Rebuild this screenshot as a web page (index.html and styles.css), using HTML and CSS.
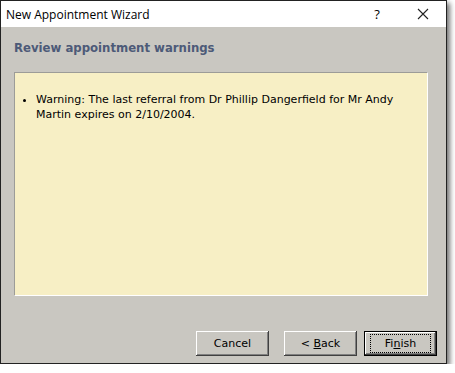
FILE: index.html
```html
<!DOCTYPE html>
<html lang="en">
<head>
    <meta charset="UTF-8">
    <title>New Appointment Wizard</title>
    <link rel="stylesheet" href="styles.css">
</head>
<body>
    <div class="window">
        <div class="titlebar">
            <span class="title">New Appointment Wizard</span>
            <span class="help">?</span>
            <span class="close">
                <svg width="12" height="12" viewBox="0 0 12 12"><path d="M1 1 L11 11 M11 1 L1 11" stroke="#222" stroke-width="1.1" fill="none"/></svg>
            </span>
        </div>
        <div class="content">
            <h1>Review appointment warnings</h1>
            <div class="panel">
                <ul class="warnings">
                    <li>Warning: The last referral from Dr Phillip Dangerfield for Mr Andy Martin expires on 2/10/2004.</li>
                </ul>
            </div>
            <div class="buttons">
                <button type="button" class="btn">Cancel</button>
                <button type="button" class="btn back">&lt; <u>B</u>ack</button>
                <button type="button" class="btn default"><span class="focus">Fi<u>n</u>ish</span></button>
            </div>
        </div>
    </div>
</body>
</html>
```

FILE: styles.css
```css
body {
    margin: 0;
    background-color: #fff;
    font-family: "DejaVu Sans", sans-serif;
}

.window {
    width: 445px;
    height: 362px;
    border: 1px solid #222;
    background-color: #c9c7c1;
    box-shadow: 3px 3px 5px rgba(0, 0, 0, 0.55);
    display: flex;
    flex-direction: column;
}

.titlebar {
    height: 26px;
    background-color: #fff;
    display: flex;
    align-items: center;
    font-family: "Open Sans", sans-serif;
    font-size: 12px;
    color: #000;
}

.title {
    padding-left: 5px;
    flex: 1;
}

.help {
    width: 46px;
    text-align: center;
    font-size: 13px;
}

.close {
    width: 46px;
    display: flex;
    justify-content: center;
}

.content {
    flex: 1;
    display: flex;
    flex-direction: column;
    padding: 0 18px 0 13px;
}

h1 {
    margin: 13px 0 0 0;
    height: 32px;
    font-family: "DejaVu Sans Condensed", "DejaVu Sans", sans-serif;
    font-size: 13px;
    font-weight: bold;
    color: #4d5a78;
}

.panel {
    height: 222px;
    background-color: #f7efc5;
    border-top: 1px solid #9c9c98;
    border-left: 1px solid #9c9c98;
    border-right: 1px solid #fff;
    border-bottom: 1px solid #fff;
}

.warnings {
    margin: 19px 0 0 0;
    padding: 0 8px 0 21px;
    font-size: 11px;
    line-height: 15px;
    color: #000;
}

.buttons {
    display: flex;
    justify-content: flex-end;
    margin-top: 35px;
    gap: 15px;
    margin-right: -9px;
}

.btn {
    width: 73px;
    height: 25px;
    font-family: "DejaVu Sans", sans-serif;
    font-size: 11px;
    color: #000;
    background-color: #c9c7c1;
    border: none;
    border-radius: 0;
    box-shadow: inset -1px -1px #404040, inset 1px 1px #fff, inset -2px -2px #808080;
    padding: 0;
}

.back {
    margin-right: -8px;
}

.default {
    border: 1px solid #000;
}

.focus {
    display: inline-block;
    width: 59px;
    padding: 2px 0;
    border: 1px dotted #000;
}
```
